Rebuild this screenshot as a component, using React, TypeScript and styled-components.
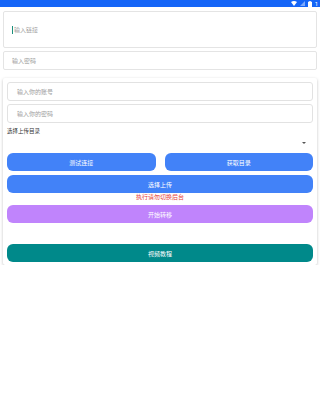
import styled, { createGlobalStyle } from "styled-components"

const GlobalStyle = createGlobalStyle`
  * { box-sizing: border-box; }
  body {
    margin: 0;
    background: #ffffff;
    font-family: "Noto Sans CJK SC", "Noto Sans", sans-serif;
  }
`

const StatusBar = styled.div`
  height: 7px;
  background: #1565f7;
  display: flex;
  justify-content: flex-end;
  align-items: center;
  gap: 3px;
  padding-right: 2px;
`

const StatusText = styled.span`
  color: #ffffff;
  font-family: "Roboto", sans-serif;
  font-size: 6px;
  line-height: 7px;
`

const Page = styled.div`
  padding: 4px 3px 0 3px;
  display: flex;
  flex-direction: column;
`

const Field = styled.div<{ $tall?: boolean }>`
  height: ${({ $tall }) => ($tall ? "37px" : "19px")};
  border: 1px solid #e4e4e4;
  border-radius: 2px;
  display: flex;
  align-items: center;
  padding-left: 8px;
  margin-bottom: 3px;
  background: #fff;
`

const Cursor = styled.span`
  width: 1px;
  height: 8px;
  background: #1a8f7c;
  margin-right: 1px;
`

const Placeholder = styled.span`
  font-size: 6px;
  color: #a0a0a0;
`

const Card = styled.div`
  margin-top: 5px;
  padding: 4px 4px 3px 4px;
  background: #fff;
  border-radius: 2px;
  box-shadow: 0 1px 3px rgba(0, 0, 0, 0.25);
  display: flex;
  flex-direction: column;
`

const CardField = styled.div`
  height: 19px;
  border: 1px solid #e2e2e2;
  border-radius: 3px;
  display: flex;
  align-items: center;
  padding-left: 9px;
  margin-bottom: 3px;
`

const Label = styled.div`
  font-size: 5.5px;
  color: #333;
  margin-top: 1px;
  height: 8px;
  line-height: 8px;
`

const SelectRow = styled.div`
  height: 15px;
  display: flex;
  justify-content: flex-end;
  align-items: center;
  padding-right: 7px;
`

const Arrow = styled.div`
  width: 0;
  height: 0;
  border-left: 2px solid transparent;
  border-right: 2px solid transparent;
  border-top: 2px solid #555;
`

const ButtonRow = styled.div`
  display: flex;
  gap: 9px;
  margin-top: 3px;

  & > * {
    flex: 1;
  }
`

const Button = styled.div<{ $bg: string; $mt?: number }>`
  height: 18px;
  flex-shrink: 0;
  border-radius: 6px;
  background: ${({ $bg }) => $bg};
  color: #ffffff;
  font-size: 6px;
  display: flex;
  align-items: center;
  justify-content: center;
  margin-top: ${({ $mt }) => $mt ?? 0}px;
`

const Warning = styled.div`
  text-align: center;
  color: #e53935;
  font-size: 6px;
  height: 12px;
  line-height: 8px;
`

export default function App() {
  return (
    <>
      <GlobalStyle />
      <StatusBar>
        <svg width="6" height="5" viewBox="0 0 12 10">
          <path d="M0 2 Q6 -2 12 2 L6 10 Z" fill="#fff" />
        </svg>
        <svg width="5" height="5" viewBox="0 0 10 10">
          <path d="M0 10 L10 0 L10 10 Z" fill="rgba(255,255,255,0.45)" />
        </svg>
        <svg width="4" height="6" viewBox="0 0 8 12">
          <rect x="2" y="0" width="4" height="1.5" fill="#fff" />
          <rect x="0" y="1.5" width="8" height="10.5" fill="#fff" />
        </svg>
        <StatusText>1</StatusText>
      </StatusBar>
      <Page>
        <Field $tall>
          <Cursor />
          <Placeholder>输入链接</Placeholder>
        </Field>
        <Field>
          <Placeholder>输入密码</Placeholder>
        </Field>
        <Card>
          <CardField>
            <Placeholder>输入你的账号</Placeholder>
          </CardField>
          <CardField>
            <Placeholder>输入你的密码</Placeholder>
          </CardField>
          <Label>选择上传目录</Label>
          <SelectRow>
            <Arrow />
          </SelectRow>
          <ButtonRow>
            <Button $bg="#4282f8">测试连接</Button>
            <Button $bg="#4282f8">获取目录</Button>
          </ButtonRow>
          <Button $bg="#4282f8" $mt={4}>选择上传</Button>
          <Warning>执行请勿切换后台</Warning>
          <Button $bg="#c084fc">开始转移</Button>
          <Button $bg="#00898a" $mt={21}>视频教程</Button>
        </Card>
      </Page>
    </>
  )
}
